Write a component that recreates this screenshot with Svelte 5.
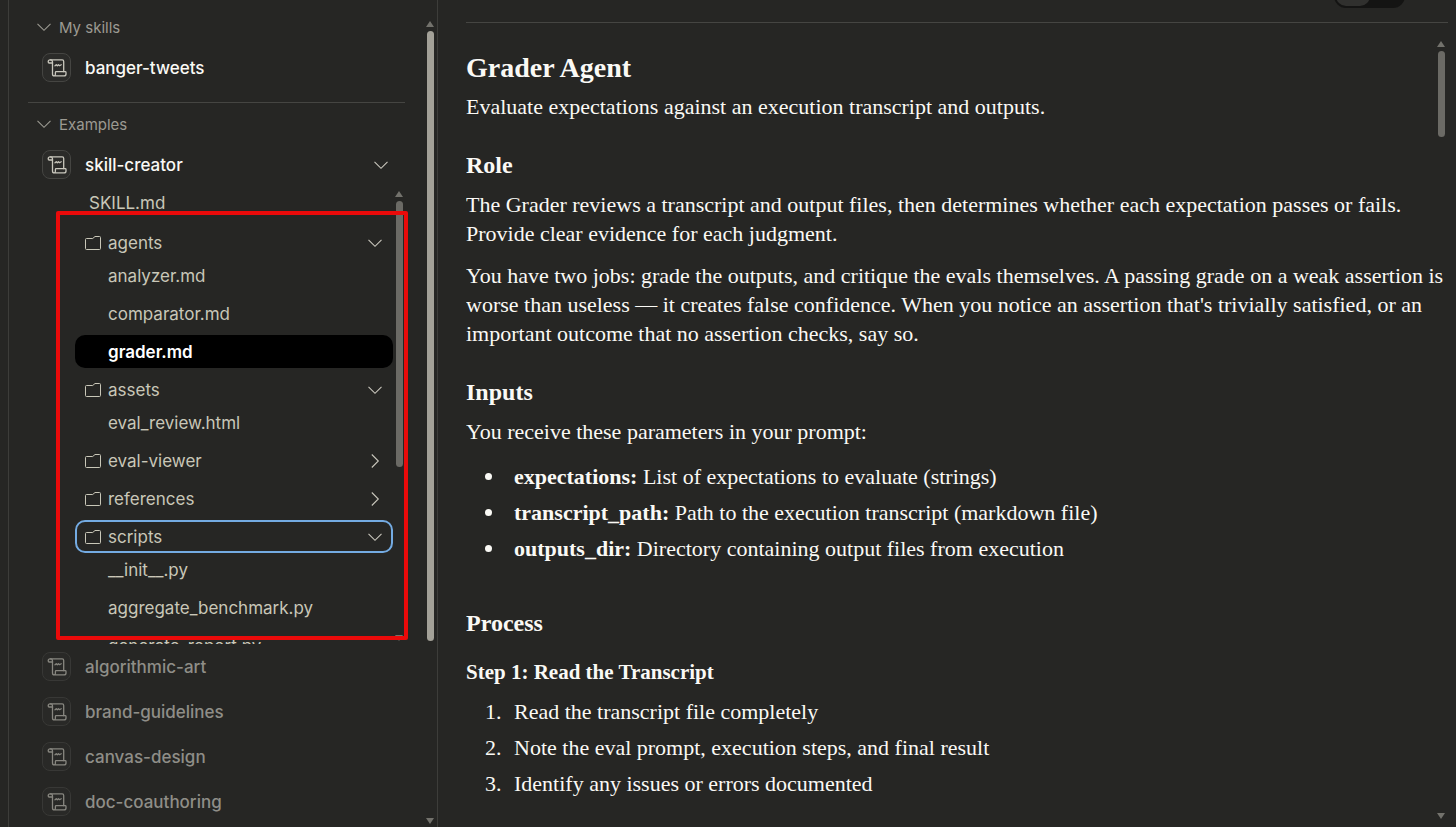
<script lang="ts">
	type Entry = { name: string; open?: boolean; focused?: boolean; files?: string[] };

	const tree: Entry[] = [
		{ name: 'agents', open: true, files: ['analyzer.md', 'comparator.md', 'grader.md'] },
		{ name: 'assets', open: true, files: ['eval_review.html'] },
		{ name: 'eval-viewer' },
		{ name: 'references' },
		{
			name: 'scripts',
			open: true,
			focused: true,
			files: ['__init__.py', 'aggregate_benchmark.py', 'generate_report.py']
		}
	];

	const examples = ['algorithmic-art', 'brand-guidelines', 'canvas-design', 'doc-coauthoring'];

	const parameters = [
		{ name: 'expectations', text: 'List of expectations to evaluate (strings)' },
		{ name: 'transcript_path', text: 'Path to the execution transcript (markdown file)' },
		{ name: 'outputs_dir', text: 'Directory containing output files from execution' }
	];

	const steps = [
		'Read the transcript file completely',
		'Note the eval prompt, execution steps, and final result',
		'Identify any issues or errors documented'
	];

	let selected = $state('grader.md');
</script>

{#snippet chevron(open: boolean)}
	<svg class="chevron" class:closed={!open} viewBox="0 0 16 16" aria-hidden="true">
		<path d="M1.5 4.8 8 11.3l6.5-6.5" />
	</svg>
{/snippet}

{#snippet scroll()}
	<span class="badge">
		<svg viewBox="0 0 20 20" aria-hidden="true">
			<path d="M5.5 5H2.2C1.500 5 1.200 4.400 1.200 3.700 1.200 2.600 1.900 1.900 3 1.900h12.200c.9 0 1.500.6 1.500 1.500v10.300" />
			<path d="M3.400 1.900c1.300 0 2.100.8 2.100 2v12c0 1.300.7 2 1.800 2h9.700c1.200 0 2-.8 2-2v-1.400c0-.5-.3-.8-.8-.8H9.200c-.5 0-.8.3-.8.8v1.700c0 1-.5 1.700-1.300 1.700" />
			<path d="M8 7.800l1.300-1.100 1 1 1.200-1 1 1 1.700-.9" />
		</svg>
	</span>
{/snippet}

<div class="app">
	<aside>
		<nav>
			<button class="section">{@render chevron(true)}My skills</button>
			<button class="skill">{@render scroll()}banger-tweets</button>
			<hr />
			<button class="section">{@render chevron(true)}Examples</button>
			<button class="skill">
				{@render scroll()}<span class="grow">skill-creator</span>{@render chevron(true)}
			</button>

			<div class="tree-wrap">
				<div class="tree">
					<button class="row root">SKILL.md</button>
					{#each tree as entry}
						<div class="group">
							<button class="row" class:focused={entry.focused}>
								<svg class="folder" viewBox="0 0 16 14" aria-hidden="true">
									<path d="M.5 3.500q0-1 1-1h6.200l2.300-2H14.500q1 0 1 1v11q0 1-1 1h-13q-1 0-1-1z" />
								</svg>
								<span class="grow">{entry.name}</span>
								{@render chevron(!!entry.open)}
							</button>
							{#if entry.files}
								<div class="files">
									{#each entry.files as file}
										<button
											class="row file"
											class:selected={selected === file}
											onclick={() => (selected = file)}>{file}</button
										>
									{/each}
								</div>
							{/if}
						</div>
					{/each}
				</div>
				<div class="scrollbar small">
					<i class="up"></i>
					<span class="thumb"></span>
					<i class="down"></i>
				</div>
				<div class="highlight"></div>
			</div>

			<div class="others">
				{#each examples as name}
					<button class="skill muted">{@render scroll()}{name}</button>
				{/each}
			</div>
		</nav>
		<div class="scrollbar outer">
			<i class="up"></i>
			<span class="thumb"></span>
			<i class="down"></i>
		</div>
	</aside>

	<main>
		<header>
			<div class="toggle">
				<button class="on" aria-label="Preview"></button>
				<button aria-label="Code"></button>
			</div>
		</header>
		<div class="content">
			<article>
				<h1>Grader Agent</h1>
				<p>Evaluate expectations against an execution transcript and outputs.</p>
				<h2>Role</h2>
				<p>
					The Grader reviews a transcript and output files, then determines whether each
					expectation passes or fails. Provide clear evidence for each judgment.
				</p>
				<p>
					You have two jobs: grade the outputs, and critique the evals themselves. A passing
					grade on a weak assertion is worse than useless — it creates false confidence. When
					you notice an assertion that's trivially satisfied, or an important outcome that no
					assertion checks, say so.
				</p>
				<h2>Inputs</h2>
				<p>You receive these parameters in your prompt:</p>
				<ul>
					{#each parameters as param}
						<li><span><strong>{param.name}:</strong> {param.text}</span></li>
					{/each}
				</ul>
				<h2>Process</h2>
				<h3>Step 1: Read the Transcript</h3>
				<ol>
					{#each steps as step}
						<li>{step}</li>
					{/each}
				</ol>
			</article>
			<div class="scrollbar page">
				<i class="up"></i>
				<span class="thumb"></span>
				<i class="down"></i>
			</div>
		</div>
	</main>
</div>

<style>
	:global(body) {
		margin: 0;
		background: #262624;
	}

	.app {
		display: flex;
		height: 100vh;
		overflow: hidden;
		color: #faf9f5;
		font-family: Inter, sans-serif;
	}

	button {
		display: flex;
		align-items: center;
		box-sizing: border-box;
		width: 100%;
		margin: 0;
		padding: 0;
		border: 0;
		background: none;
		color: inherit;
		font: inherit;
		text-align: left;
		cursor: pointer;
	}

	aside {
		display: flex;
		flex: none;
		box-sizing: border-box;
		width: 430px;
		margin-left: 8px;
		border-left: 1px solid #3d3d3a;
		border-right: 1px solid #3d3d3a;
	}

	nav {
		flex: 1;
		min-width: 0;
		padding: 17px 21px 0 19px;
	}

	.section {
		gap: 7px;
		height: 20px;
		padding-left: 8px;
		color: #9c9a92;
		font-size: 15px;
	}

	.skill {
		gap: 14px;
		height: 45px;
		padding: 0 16px 0 14px;
		font-size: 17px;
		font-weight: 500;
	}

	.section + .skill {
		height: 61px;
	}

	.muted {
		color: #8f8e88;
	}

	.muted .badge {
		opacity: 0.6;
	}

	.grow {
		flex: 1;
	}

	hr {
		height: 1px;
		margin: 4px 0 11px;
		border: 0;
		background: #454542;
	}

	.badge {
		display: flex;
		align-items: center;
		justify-content: center;
		flex: none;
		box-sizing: border-box;
		width: 29px;
		height: 29px;
		border: 1px solid #454542;
		border-radius: 8px;
		background: #2b2b29;
		color: #c9c7bd;
	}

	.badge svg {
		width: 20px;
		height: 20px;
		fill: none;
		stroke: currentColor;
		stroke-width: 1.3;
		stroke-linejoin: round;
		stroke-linecap: round;
	}

	.chevron {
		flex: none;
		width: 16px;
		height: 16px;
		fill: none;
		stroke: #c9c7bd;
		stroke-width: 1.1;
	}

	.section .chevron {
		stroke: #9c9a92;
	}

	.chevron.closed {
		transform: rotate(-90deg);
	}

	.tree-wrap {
		position: relative;
		display: flex;
		gap: 2px;
		height: 456px;
		margin: -7px 2px 0 47px;
	}

	.tree {
		display: flex;
		flex: 1;
		flex-direction: column;
		gap: 5px;
		overflow: hidden;
		color: #c9c7b8;
		font-size: 17px;
	}

	.row {
		flex: none;
		gap: 7px;
		height: 33px;
		padding: 0 10px;
		border-radius: 10px;
	}

	.root {
		padding: 0 10px 3px 14px;
	}

	.file {
		padding-left: 33px;
	}

	.files {
		display: flex;
		flex-direction: column;
		gap: 5px;
	}

	.selected {
		background: #000;
		color: #fff;
		font-weight: 600;
	}

	.focused {
		outline: 2px solid #74abe2;
		outline-offset: -2px;
	}

	.folder {
		flex: none;
		width: 16px;
		height: 14px;
		fill: none;
		stroke: currentColor;
	}

	.highlight {
		position: absolute;
		top: 23px;
		right: -5px;
		bottom: 4px;
		left: -19px;
		border: 4px solid #ea0a0a;
		border-radius: 2px;
		pointer-events: none;
	}

	.scrollbar {
		display: flex;
		flex: none;
		flex-direction: column;
		align-items: center;
		gap: 4px;
		box-sizing: border-box;
		width: 8px;
		color: #73726c;
	}

	.scrollbar i {
		border: 4px solid transparent;
	}

	.scrollbar .up {
		border-top: 0;
		border-bottom: 6px solid currentColor;
	}

	.scrollbar .down {
		margin-top: auto;
		border-bottom: 0;
		border-top: 6px solid currentColor;
	}

	.thumb {
		width: 7px;
		border-radius: 4px;
		background: #6b6a65;
	}

	.small {
		padding: 3px 0;
	}

	.small .thumb {
		height: 59%;
	}

	.outer {
		padding: 21px 0 3px;
		margin-right: 3px;
	}

	.outer .thumb {
		height: 76%;
		background: #a3a198;
	}

	.page {
		padding: 18px 0 8px;
		margin: 0 3px 0 -8px;
	}

	.page .thumb {
		height: 11%;
	}

	main {
		display: flex;
		flex: 1;
		flex-direction: column;
		min-width: 0;
		padding: 0 8px 0 28px;
	}

	header {
		display: flex;
		flex: none;
		align-items: flex-end;
		justify-content: flex-end;
		box-sizing: border-box;
		height: 23px;
		padding: 0 43px 14px 0;
		border-bottom: 1px solid #454542;
	}

	.toggle {
		display: flex;
		flex: none;
		box-sizing: border-box;
		width: 71px;
		height: 36px;
		padding: 2px;
		border-radius: 12px;
		background: #141413;
	}

	.toggle button {
		flex: 1;
		border-radius: 10px;
	}

	.toggle .on {
		background: #30302e;
	}

	.content {
		display: flex;
		flex: 1;
		min-height: 0;
	}

	article {
		flex: 1;
		min-width: 0;
		padding-top: 29px;
		overflow: hidden;
		font-family: 'Liberation Serif', serif;
		font-size: 22px;
		line-height: 29px;
	}

	h1,
	h2,
	h3,
	p,
	ul,
	ol {
		margin: 0;
		padding: 0;
	}

	h1 {
		margin-bottom: 8px;
		font-size: 28px;
		line-height: 32px;
	}

	h2 {
		padding: 29px 0 10px;
		font-size: 24px;
		line-height: 30px;
	}

	h3 {
		padding: 10px 0;
		font-size: 21px;
	}

	p + p {
		margin-top: 13px;
	}

	ul,
	ol {
		display: flex;
		flex-direction: column;
		gap: 7px;
		list-style: none;
		counter-reset: step;
	}

	ul {
		padding: 16px 0;
	}

	li {
		display: flex;
		align-items: center;
	}

	li::before {
		box-sizing: border-box;
		width: 48px;
		padding-left: 19px;
	}

	ul li::before {
		content: '';
		width: 7px;
		height: 7px;
		margin: 0 22px 0 19px;
		padding: 0;
		border-radius: 50%;
		background: currentColor;
	}

	ol li::before {
		counter-increment: step;
		content: counter(step) '.';
	}
</style>
